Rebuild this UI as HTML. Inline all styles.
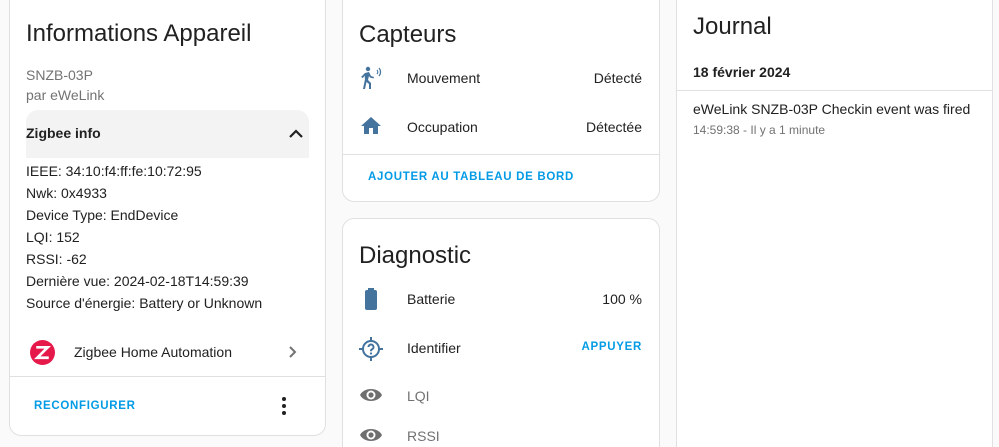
<!DOCTYPE html>
<html><head><meta charset="utf-8"><style>
*{margin:0;padding:0;box-sizing:border-box}
html{height:447px;overflow:hidden}
body{width:999px;height:447px;background:#fafafa;font-family:"Liberation Sans",sans-serif;color:#212121;position:relative;overflow:hidden}
.card{position:absolute;background:#fff;border:1px solid #e0e0e0;border-radius:12px}
.a{position:absolute;white-space:nowrap}
.t{font-size:14px}
.h{font-size:24px;color:#212121}
.blue{color:#039be5;font-size:11.5px;font-weight:bold;letter-spacing:0.7px}
.hr{position:absolute;height:1px;background:#e0e0e0}
</style></head><body>
<div class="card" style="left:9px;top:-12px;width:317px;height:448px"></div>
<div class="a h" style="left:26px;top:20px">Informations Appareil</div>
<div class="a t" style="left:26px;top:67px;color:#727272">SNZB-03P</div>
<div class="a t" style="left:26px;top:87px;color:#727272">par eWeLink</div>
<div class="a" style="left:26px;top:110px;width:283px;height:48px;background:#f3f3f3;border-radius:12px 12px 0 0"></div>
<div class="a t" style="left:26px;top:125px;font-weight:bold">Zigbee info</div>
<svg class="a" style="left:286px;top:125px" width="20" height="16" viewBox="0 0 20 16"><path d="M4 12 L10 6 L16 12" stroke="#212121" stroke-width="2.2" fill="none"/></svg>
<div class="a t" style="left:26px;top:160px;line-height:22px">IEEE: 34:10:f4:ff:fe:10:72:95<br>Nwk: 0x4933<br>Device Type: EndDevice<br>LQI: 152<br>RSSI: -62<br>Dernière vue: 2024-02-18T14:59:39<br>Source d'énergie: Battery or Unknown</div>
<svg class="a" style="left:30px;top:340px" width="25" height="25" viewBox="0 0 24 24"><circle cx="12" cy="12" r="12" fill="#e6194b"/><path d="M6 7h11L7 17h11" stroke="#fff" stroke-width="2.6" fill="none"/></svg>
<div class="a t" style="left:74px;top:344px">Zigbee Home Automation</div>
<svg class="a" style="left:285px;top:344px" width="16" height="16" viewBox="0 0 16 16"><path d="M5 3 L10 8 L5 13" stroke="#727272" stroke-width="2" fill="none"/></svg>
<div class="hr" style="left:10px;top:376px;width:315px"></div>
<div class="a blue" style="left:34px;top:400px">RECONFIGURER</div>
<svg class="a" style="left:279px;top:396px" width="10" height="20"><circle cx="5" cy="3" r="2" fill="#212121"/><circle cx="5" cy="10" r="2" fill="#212121"/><circle cx="5" cy="17" r="2" fill="#212121"/></svg>

<div class="card" style="left:342px;top:-12px;width:318px;height:214px"></div>
<div class="a h" style="left:359px;top:21px">Capteurs</div>
<svg class="a" style="left:358px;top:66px" width="26" height="24" viewBox="0 0 26 24"><g fill="#44739e"><circle cx="10" cy="3" r="2.2"/><path d="M7 7 L11 6 L13 10 L16 11 L15.5 12.5 L12 11.5 L11 10 L10 14 L13 17 L13 23 L11 23 L11 18 L8.5 16 L7 23 L5 23 L7 13 L6.5 9.5 L5 12 L3 11 Z"/></g><path d="M19 4a3 3 0 0 1 0 4M21 2a6 6 0 0 1 0 8" stroke="#44739e" stroke-width="1.2" fill="none"/></svg>
<div class="a t" style="left:407px;top:70px">Mouvement</div>
<div class="a t" style="right:357px;top:70px">Détecté</div>
<svg class="a" style="left:360px;top:116px" width="22" height="20" viewBox="0 0 22 20"><path d="M11 1 L21 10 L18 10 L18 18 L13 18 L13 12 L9 12 L9 18 L4 18 L4 10 L1 10 Z" fill="#44739e"/></svg>
<div class="a t" style="left:407px;top:119px">Occupation</div>
<div class="a t" style="right:357px;top:119px">Détectée</div>
<div class="hr" style="left:343px;top:154px;width:316px"></div>
<div class="a blue" style="left:368px;top:171px">AJOUTER AU TABLEAU DE BORD</div>

<div class="card" style="left:342px;top:218px;width:318px;height:250px"></div>
<div class="a h" style="left:359px;top:242px">Diagnostic</div>
<svg class="a" style="left:363px;top:288px" width="16" height="22"><rect x="2" y="2" width="12" height="20" rx="2" fill="#44739e"/><rect x="5" y="0" width="6" height="3" fill="#44739e"/></svg>
<div class="a t" style="left:407px;top:291px">Batterie</div>
<div class="a t" style="right:357px;top:291px">100 %</div>
<svg class="a" style="left:358px;top:336px" width="26" height="26" viewBox="0 0 26 26"><g stroke="#44739e" stroke-width="2" fill="none"><circle cx="13" cy="13" r="8"/><path d="M13 1v4M13 21v4M1 13h4M21 13h4"/><path d="M10.5 11a2.5 2.5 0 1 1 3.5 2.3c-1 .5-1 1-1 2"/></g><circle cx="13" cy="17.5" r="1.1" fill="#44739e"/></svg>
<div class="a t" style="left:407px;top:340px">Identifier</div>
<div class="a blue" style="right:357px;top:341px">APPUYER</div>
<svg class="a" style="left:359px;top:386px" width="24" height="18" viewBox="0 0 24 18"><path d="M1 9 C5 1 19 1 23 9 C19 17 5 17 1 9Z" fill="#6f6f6f"/><circle cx="12" cy="9" r="4.5" fill="#fff"/><circle cx="12" cy="9" r="2.6" fill="#6f6f6f"/></svg>
<div class="a t" style="left:407px;top:388px;color:#727272">LQI</div>
<svg class="a" style="left:359px;top:426px" width="24" height="18" viewBox="0 0 24 18"><path d="M1 9 C5 1 19 1 23 9 C19 17 5 17 1 9Z" fill="#6f6f6f"/><circle cx="12" cy="9" r="4.5" fill="#fff"/><circle cx="12" cy="9" r="2.6" fill="#6f6f6f"/></svg>
<div class="a t" style="left:407px;top:428px;color:#727272">RSSI</div>

<div class="card" style="left:676px;top:-12px;width:317px;height:480px"></div>
<div class="a h" style="left:693px;top:13px">Journal</div>
<div class="a t" style="left:693px;top:64px;font-weight:bold">18 février 2024</div>
<div class="hr" style="left:677px;top:90px;width:315px"></div>
<div class="a t" style="left:693px;top:101px">eWeLink SNZB-03P Checkin event was fired</div>
<div class="a" style="left:693px;top:123px;font-size:12px;color:#727272">14:59:38 - Il y a 1 minute</div>
</body></html>
